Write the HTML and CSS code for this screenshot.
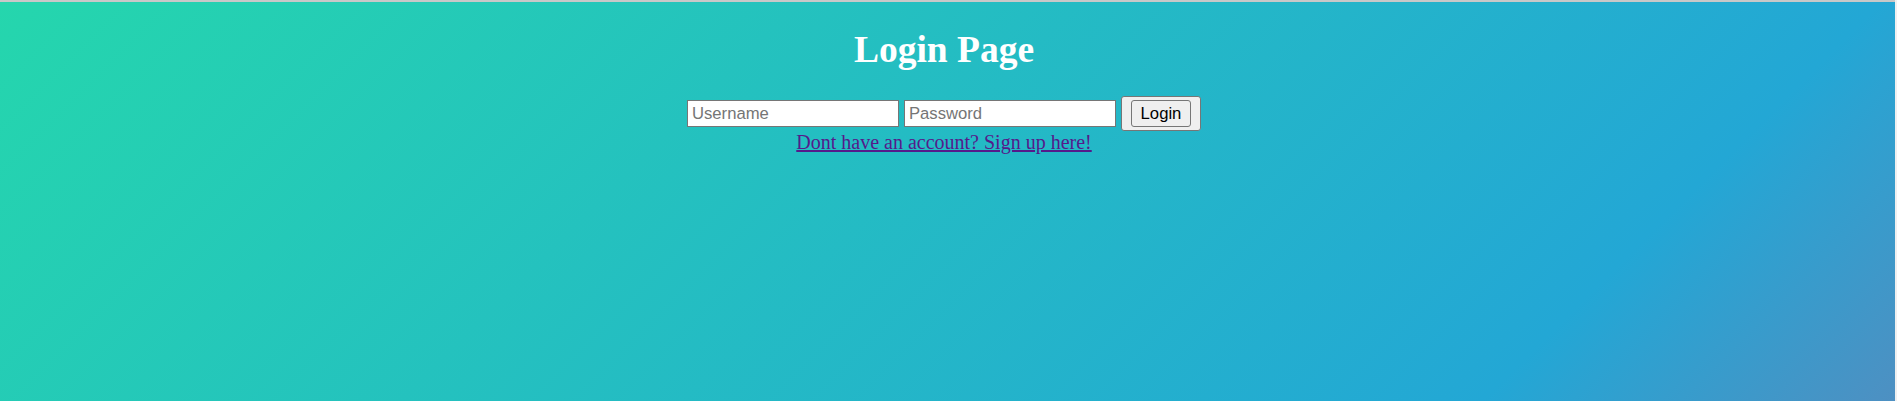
FILE: index.html
```html
<!DOCTYPE html>
<html lang="en">
<head>
<meta charset="utf-8">
<title>Login Page</title>
<link rel="stylesheet" href="styles.css">
</head>
<body>
<div class="page">
  <h1 class="title">Login Page</h1>
  <form class="login-form">
    <input class="field" type="text" placeholder="Username">
    <input class="field" type="password" placeholder="Password">
    <button class="outer-btn" type="button"><span class="inner-btn">Login</span></button>
    <br>
    <a class="signup-link" href="#">Dont have an account? Sign up here!</a>
  </form>
</div>
</body>
</html>
```
FILE: styles.css
```css
html {
  background: #f0f0f0;
}
body {
  margin: 0;
  font-family: "Liberation Serif", "Times New Roman", serif;
}
.page {
  box-sizing: border-box;
  height: 401px;
  margin-right: 2px;
  border-top: 2px solid #c8c8c8;
  padding: 0 15px 0 8px;
  background: linear-gradient(135deg, #25d6ad 0px, #23a7d5 1330px, #e73c7e 2680px);
  overflow: hidden;
}
.title {
  margin: 26px 0 25px;
  font-size: 37.5px;
  font-weight: bold;
  line-height: 43px;
  color: #ffffff;
  text-align: center;
}
.login-form {
  text-align: center;
  font-size: 20px;
  line-height: 23px;
}
.field {
  box-sizing: border-box;
  width: 212px;
  height: 27px;
  margin: 0;
  padding: 1px 4px;
  border: 1px solid #767676;
  background: #ffffff;
  font-family: "Liberation Sans", Arial, sans-serif;
  font-size: 16.67px;
  color: #000;
  vertical-align: middle;
}
.field::placeholder {
  color: #757575;
}
.outer-btn {
  box-sizing: border-box;
  width: 80px;
  height: 35px;
  margin: 0;
  padding: 0;
  border: 1px solid #767676;
  border-radius: 3px;
  background: #efefef;
  display: inline-flex;
  align-items: center;
  justify-content: center;
  vertical-align: middle;
}
.inner-btn {
  box-sizing: border-box;
  width: 60px;
  height: 27px;
  border: 1px solid #767676;
  border-radius: 3px;
  background: #efefef;
  font-family: "Liberation Sans", Arial, sans-serif;
  font-size: 16.67px;
  line-height: 25px;
  color: #000;
  display: flex;
  align-items: center;
  justify-content: center;
}
.signup-link {
  color: #551a8b;
  text-decoration: underline;
}
```
